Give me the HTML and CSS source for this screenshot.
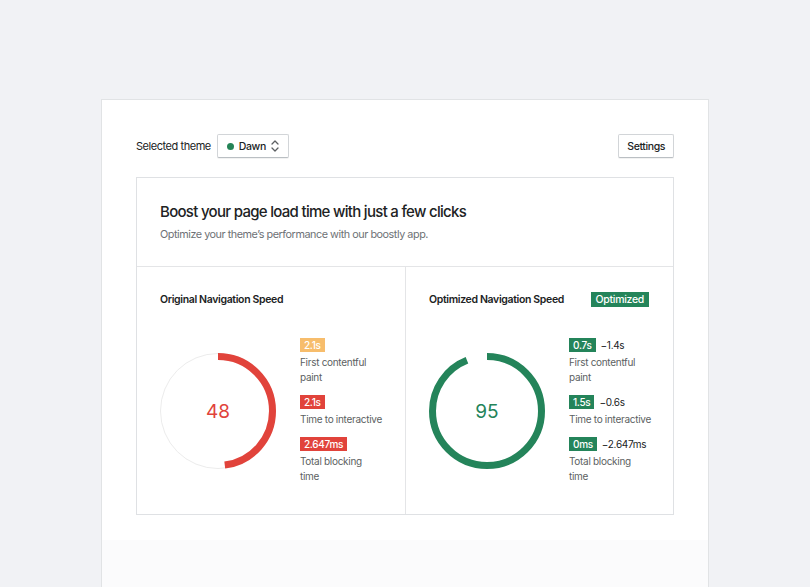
FILE: index.html
```html
<!DOCTYPE html>
<html lang="en">
<head>
    <meta charset="UTF-8">
    <title>Boostly - Speed</title>
    <link rel="stylesheet" href="styles.css">
</head>
<body>
    <div class="panel">
        <div class="toolbar">
            <div class="theme-select">
                <span class="theme-label">Selected theme</span>
                <button class="btn btn-theme">
                    <span class="dot"></span>
                    Dawn
                    <svg class="chevrons" width="8" height="12" viewBox="0 0 8 12" fill="none" stroke="#5c5f62" stroke-width="1.3" stroke-linecap="round" stroke-linejoin="round"><path d="M1 4l3-3 3 3"/><path d="M1 8l3 3 3-3"/></svg>
                </button>
            </div>
            <button class="btn">Settings</button>
        </div>

        <div class="card">
            <div class="card-head">
                <h1>Boost your page load time with just a few clicks</h1>
                <p>Optimize your theme’s performance with our boostly app.</p>
            </div>
            <div class="columns">
                <div class="col">
                    <div class="col-title">
                        <h2>Original Navigation Speed</h2>
                    </div>
                    <div class="result">
                        <div class="gauge red">
                            <svg width="116" height="116" viewBox="0 0 116 116">
                                <circle cx="58" cy="58" r="57.5" fill="none" stroke="#ececec" stroke-width="1"/>
                                <circle class="arc" cx="58" cy="58" r="54.5" fill="none" stroke-width="7" pathLength="100" stroke-dasharray="48 100" transform="rotate(-90 58 58)"/>
                            </svg>
                            <span class="score">48</span>
                        </div>
                        <div class="metrics">
                            <div class="metric">
                                <div class="metric-top"><span class="badge orange">2.1s</span></div>
                                <div class="metric-label">First contentful paint</div>
                            </div>
                            <div class="metric">
                                <div class="metric-top"><span class="badge bad">2.1s</span></div>
                                <div class="metric-label">Time to interactive</div>
                            </div>
                            <div class="metric">
                                <div class="metric-top"><span class="badge bad">2.647ms</span></div>
                                <div class="metric-label">Total blocking time</div>
                            </div>
                        </div>
                    </div>
                </div>
                <div class="col">
                    <div class="col-title">
                        <h2>Optimized Navigation Speed</h2>
                        <span class="badge good tag">Optimized</span>
                    </div>
                    <div class="result">
                        <div class="gauge green">
                            <svg width="116" height="116" viewBox="0 0 116 116">
                                <circle class="arc" cx="58" cy="58" r="54.5" fill="none" stroke-width="7" pathLength="100" stroke-dasharray="94 100" transform="rotate(-90 58 58)"/>
                            </svg>
                            <span class="score">95</span>
                        </div>
                        <div class="metrics">
                            <div class="metric">
                                <div class="metric-top"><span class="badge good">0.7s</span><span class="diff">−1.4s</span></div>
                                <div class="metric-label">First contentful paint</div>
                            </div>
                            <div class="metric">
                                <div class="metric-top"><span class="badge good">1.5s</span><span class="diff">−0.6s</span></div>
                                <div class="metric-label">Time to interactive</div>
                            </div>
                            <div class="metric">
                                <div class="metric-top"><span class="badge good">0ms</span><span class="diff">−2.647ms</span></div>
                                <div class="metric-label">Total blocking time</div>
                            </div>
                        </div>
                    </div>
                </div>
            </div>
        </div>
    </div>
</body>
</html>
```

FILE: styles.css
```css
html, body { height: 100%; }
body { margin: 0; background: #f1f2f5; font-family: Inter, "Noto Sans", sans-serif; color: #202223; overflow: hidden; letter-spacing: -0.4px; }

.panel { margin: 99px 0 0 101px; width: 608px; min-height: 600px; background: linear-gradient(#fff 440px, #fbfbfc 440px); border: 1px solid #e1e3e5; border-bottom: none; padding: 34px 34px 0; box-sizing: border-box; }

.toolbar { display: flex; justify-content: space-between; align-items: center; }
.theme-select { display: flex; align-items: center; gap: 6px; }
.theme-label { font-size: 11px; letter-spacing: -0.45px; }
.btn { font-family: inherit; font-size: 10.5px; font-weight: 500; letter-spacing: -0.4px; color: #202223; background: #fff; border: 1px solid #d2d5d8; border-bottom-color: #babfc3; border-radius: 2px; height: 24px; padding: 0 8px; box-shadow: 0 1px 0 rgba(0,0,0,0.05); display: inline-flex; align-items: center; gap: 4px; cursor: pointer; }
.btn-theme { padding: 0 9px; }
.dot { width: 7px; height: 7px; border-radius: 50%; background: #248457; margin-right: 1px; }
.chevrons { margin-left: 1px; }

.card { margin-top: 19px; border: 1px solid #dfe1e4; }
.card-head { padding: 25px 24px 24px 23px; border-bottom: 1px solid #e4e5e7; }
.card-head h1 { margin: 0; font-size: 15px; line-height: 18px; font-weight: 500; letter-spacing: -0.7px; }
.card-head p { margin: 7px 0 0; font-size: 10.8px; line-height: 14px; color: #6d7175; letter-spacing: -0.45px; }

.columns { display: grid; grid-template-columns: 268px minmax(0, 1fr); }
.col { padding: 24px 24px 30px 23px; min-width: 0; }
.col + .col { border-left: 1px solid #e4e5e7; }
.col-title { display: flex; justify-content: space-between; align-items: center; height: 16px; }
.col-title h2 { margin: 0; font-size: 10.5px; font-weight: 600; letter-spacing: -0.35px; }

.result { display: flex; align-items: center; gap: 24px; margin-top: 31px; }
.gauge { position: relative; width: 116px; height: 116px; flex: none; }
.gauge svg { display: block; }
.score { position: absolute; inset: 0; display: flex; align-items: center; justify-content: center; font-size: 19px; letter-spacing: 0; }
.red .arc { stroke: #e1433b; }
.red .score { color: #e1433b; }
.green .arc { stroke: #24845a; }
.green .score { color: #24845a; }

.metrics { display: flex; flex-direction: column; gap: 10px; width: 83px; flex: none; }
.metric-top { display: flex; align-items: center; gap: 5px; white-space: nowrap; height: 14px; }
.badge { display: inline-block; font-size: 10px; font-weight: 500; color: #fff; line-height: 14px; padding: 0 4px; letter-spacing: -0.3px; }
.orange { background: #f7bd6c; }
.bad { background: #e1433b; }
.good { background: #24845a; }
.tag { font-size: 10.5px; line-height: 15px; padding: 0 5px; }
.diff { font-size: 10px; color: #202223; letter-spacing: -0.3px; }
.metric-label { margin-top: 3px; font-size: 10px; line-height: 15px; color: #5c5f62; letter-spacing: -0.3px; }
```
